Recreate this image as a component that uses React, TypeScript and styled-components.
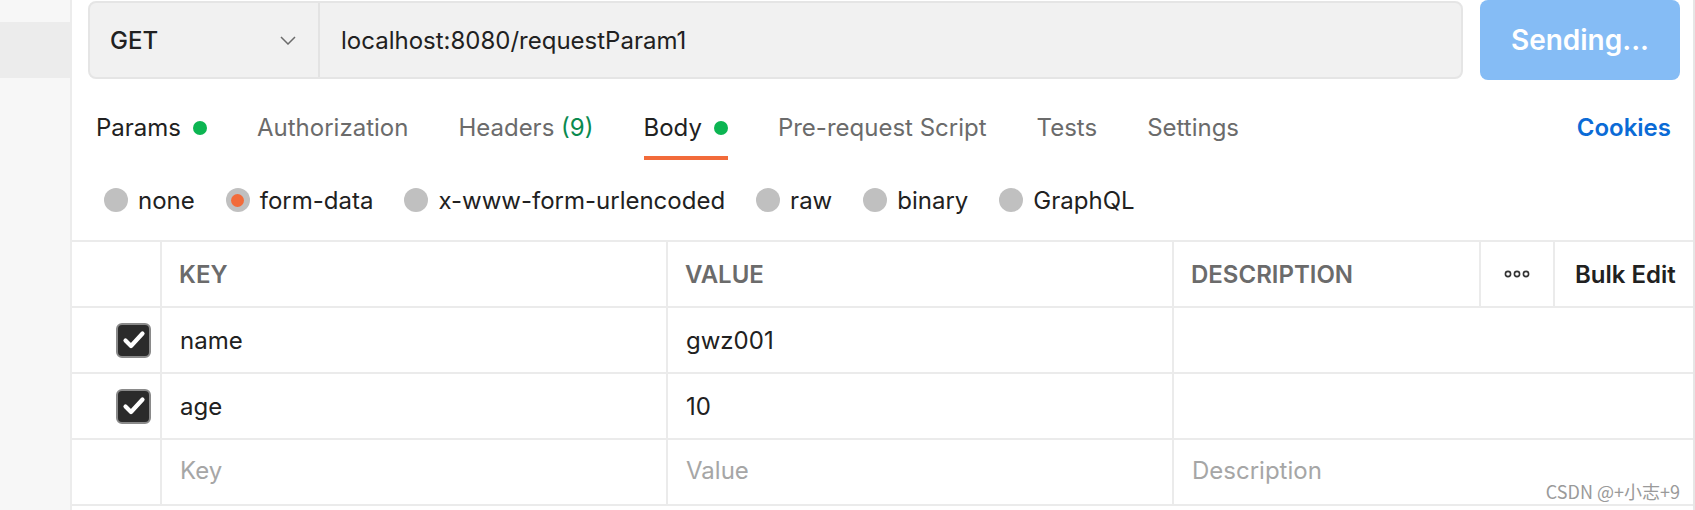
import React from "react";
import styled, { createGlobalStyle } from "styled-components";

const GlobalStyle = createGlobalStyle`
  html, body {
    margin: 0;
    padding: 0;
    background: #ffffff;
  }
  body {
    font-family: Inter, "Noto Sans", "Liberation Sans", sans-serif;
    color: #212121;
  }
`;

type Row = { key: string; value: string; checked: boolean };

const rows: Row[] = [
  { key: "name", value: "gwz001", checked: true },
  { key: "age", value: "10", checked: true },
];

const tabs = [
  { label: "Params", active: true, dot: true },
  { label: "Authorization" },
  { label: "Headers", count: 9 },
  { label: "Body", active: true, selected: true, dot: true },
  { label: "Pre-request Script" },
  { label: "Tests" },
  { label: "Settings" },
];

const bodyTypes = [
  { label: "none" },
  { label: "form-data", selected: true },
  { label: "x-www-form-urlencoded" },
  { label: "raw" },
  { label: "binary" },
  { label: "GraphQL" },
];

export default function App() {
  return (
    <>
      <GlobalStyle />
      <Page>
        <Sidebar>
          <SidebarItem />
        </Sidebar>
        <Main>
          <TopBar>
            <UrlBar>
              <MethodSelect>
                <MethodLabel>GET</MethodLabel>
                <svg width="16" height="9" viewBox="0 0 16 9" fill="none">
                  <path d="M1 1l7 7 7-7" stroke="#6b6b6b" strokeWidth="1.5" />
                </svg>
              </MethodSelect>
              <UrlInput>localhost:8080/requestParam1</UrlInput>
            </UrlBar>
            <SendButton>Sending...</SendButton>
          </TopBar>

          <TabBar>
            {tabs.map(t => (
              <Tab key={t.label} $active={!!t.active} $selected={!!t.selected}>
                <span>
                  {t.label}
                  {t.count !== undefined && <Count> ({t.count})</Count>}
                </span>
                {t.dot && <Dot />}
              </Tab>
            ))}
            <Cookies>Cookies</Cookies>
          </TabBar>

          <RadioRow>
            {bodyTypes.map(b => (
              <RadioOption key={b.label}>
                <Radio $selected={!!b.selected} />
                {b.label}
              </RadioOption>
            ))}
          </RadioRow>

          <Table>
            <HeadCell />
            <HeadCell>KEY</HeadCell>
            <HeadCell>VALUE</HeadCell>
            <HeadCell>DESCRIPTION</HeadCell>
            <HeadCell $center>
              <svg width="26" height="8" viewBox="0 0 26 8" fill="none">
                <circle cx="4" cy="4" r="2.6" stroke="#333" strokeWidth="1.6" />
                <circle cx="13" cy="4" r="2.6" stroke="#333" strokeWidth="1.6" />
                <circle cx="22" cy="4" r="2.6" stroke="#333" strokeWidth="1.6" />
              </svg>
            </HeadCell>
            <HeadCell $dark>Bulk Edit</HeadCell>

            {rows.map(r => (
              <React.Fragment key={r.key}>
                <CheckCell>
                  {r.checked && (
                    <Checkbox>
                      <svg width="24" height="20" viewBox="0 0 24 20" fill="none">
                        <path
                          d="M3.5 10.5l5.5 5.5L20.5 3.5"
                          stroke="#fff"
                          strokeWidth="4.2"
                          strokeLinecap="round"
                          strokeLinejoin="round"
                        />
                      </svg>
                    </Checkbox>
                  )}
                </CheckCell>
                <Cell>{r.key}</Cell>
                <Cell>{r.value}</Cell>
                <Cell $span={3} />
              </React.Fragment>
            ))}

            <CheckCell />
            <Cell $placeholder>Key</Cell>
            <Cell $placeholder>Value</Cell>
            <Cell $placeholder $span={3}>
              Description
            </Cell>
          </Table>
        </Main>
        <Watermark>CSDN @+小志+9</Watermark>
      </Page>
    </>
  );
}

const Page = styled.div`
  position: relative;
  display: flex;
  width: 1695px;
  height: 510px;
  overflow: hidden;
`;

const Sidebar = styled.div`
  width: 70px;
  flex-shrink: 0;
  background: #f7f7f7;
  border-right: 2px solid #ececec;
`;

const SidebarItem = styled.div`
  margin-top: 22px;
  height: 56px;
  background: #ececec;
`;

const Main = styled.div`
  flex: 1;
  display: flex;
  flex-direction: column;
  border-right: 2px solid #e6e6e6;
`;

const TopBar = styled.div`
  display: flex;
  align-items: center;
  gap: 17px;
  height: 80px;
  padding: 0 13px 0 16px;
`;

const UrlBar = styled.div`
  flex: 1;
  display: flex;
  height: 78px;
  box-sizing: border-box;
  background: #f1f1f1;
  border: 2px solid #e5e5e5;
  border-radius: 8px;
`;

const MethodSelect = styled.div`
  width: 230px;
  flex-shrink: 0;
  box-sizing: border-box;
  display: flex;
  align-items: center;
  justify-content: space-between;
  padding: 0 22px 0 20px;
  border-right: 2px solid #e3e3e3;
`;

const MethodLabel = styled.span`
  font-size: 24px;
  font-weight: 500;
  color: #212121;
`;

const UrlInput = styled.div`
  display: flex;
  align-items: center;
  padding-left: 21px;
  font-size: 24px;
  color: #212121;
`;

const SendButton = styled.button`
  width: 200px;
  height: 80px;
  border: none;
  border-radius: 8px;
  background: #85bcf5;
  color: #ffffff;
  font-family: Inter, "Liberation Sans", sans-serif;
  font-size: 28px;
  font-weight: 600;
  padding: 0;
`;

const TabBar = styled.div`
  display: flex;
  gap: 50px;
  padding: 0 22px 0 24px;
`;

const Tab = styled.div<{ $active: boolean; $selected: boolean }>`
  display: flex;
  align-items: center;
  gap: 12px;
  height: 80px;
  box-sizing: border-box;
  padding-top: 19px;
  font-size: 24px;
  color: ${p => (p.$active ? "#212121" : "#6b6b6b")};
  border-bottom: 4px solid ${p => (p.$selected ? "#f26b3a" : "transparent")};
`;

const Count = styled.span`
  color: #0a8a4f;
`;

const Dot = styled.span`
  width: 14px;
  height: 14px;
  border-radius: 50%;
  background: #0cb552;
`;

const Cookies = styled.div`
  margin-left: auto;
  display: flex;
  align-items: center;
  height: 80px;
  box-sizing: border-box;
  padding-top: 19px;
  padding-bottom: 4px;
  font-size: 24px;
  font-weight: 600;
  color: #0b6bd6;
`;

const RadioRow = styled.div`
  display: flex;
  align-items: center;
  gap: 31px;
  height: 80px;
  padding-left: 32px;
`;

const RadioOption = styled.label`
  display: flex;
  align-items: center;
  gap: 10px;
  font-size: 24px;
  color: #212121;
`;

const Radio = styled.span<{ $selected: boolean }>`
  width: 24px;
  height: 24px;
  border-radius: 50%;
  background: #c0c0c0;
  display: flex;
  align-items: center;
  justify-content: center;

  &::after {
    content: "";
    display: ${p => (p.$selected ? "block" : "none")};
    width: 13px;
    height: 13px;
    border-radius: 50%;
    background: #f26b3a;
  }
`;

const Table = styled.div`
  display: grid;
  grid-template-columns: 88px 506px 506px 307px 74px 1fr;
  grid-auto-rows: 66px;
  border-top: 2px solid #ebebeb;
`;

const BaseCell = styled.div`
  display: flex;
  align-items: center;
  box-sizing: border-box;
  border-bottom: 2px solid #ebebeb;
  font-size: 24px;
`;

const HeadCell = styled(BaseCell)<{ $center?: boolean; $dark?: boolean }>`
  padding-left: ${p => (p.$center ? "0" : p.$dark ? "20px" : "17px")};
  justify-content: ${p => (p.$center ? "center" : "flex-start")};
  font-weight: 600;
  color: ${p => (p.$dark ? "#212121" : "#6b6b6b")};

  & + & {
    border-left: 2px solid #ebebeb;
  }
`;

const CheckCell = styled(BaseCell)`
  justify-content: flex-end;
  padding-right: 9px;
`;

const Cell = styled(BaseCell)<{ $placeholder?: boolean; $span?: number }>`
  grid-column: span ${p => p.$span ?? 1};
  padding-left: 18px;
  padding-bottom: ${p => (p.$placeholder ? "3px" : "0")};
  border-left: 2px solid #ebebeb;
  color: ${p => (p.$placeholder ? "#a6a6a6" : "#212121")};
`;

const Checkbox = styled.span`
  width: 35px;
  height: 35px;
  box-sizing: border-box;
  border-radius: 6px;
  background: #2b2b2b;
  border: 2px solid #8a8a8a;
  display: flex;
  align-items: center;
  justify-content: center;
`;

const Watermark = styled.div`
  position: absolute;
  right: 15px;
  bottom: 6px;
  font-family: "Noto Sans CJK SC", "Liberation Sans", sans-serif;
  font-size: 18px;
  color: #9a9a9a;
`;
